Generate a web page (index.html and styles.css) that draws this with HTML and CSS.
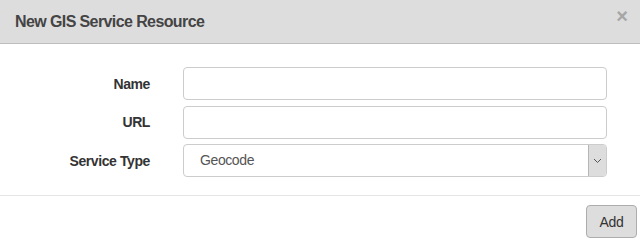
FILE: index.html
```html
<!DOCTYPE html>
<html lang="en">
<head>
    <meta charset="UTF-8">
    <title>New GIS Service Resource</title>
    <link rel="stylesheet" href="styles.css">
</head>
<body>
    <div class="modal">
        <div class="modal-header">
            <h4 class="modal-title">New GIS Service Resource</h4>
            <button type="button" class="close">&times;</button>
        </div>

        <div class="modal-body">
            <form class="form-grid">
                <label for="name">Name</label>
                <input type="text" id="name">

                <label for="url">URL</label>
                <input type="text" id="url">

                <label for="service-type">Service Type</label>
                <div class="select">
                    <span class="select-value">Geocode</span>
                    <span class="select-arrow">
                        <svg width="9" height="6" viewBox="0 0 9 6"><path d="M1 1 L4.5 4.5 L8 1" fill="none" stroke="#555" stroke-width="1"/></svg>
                    </span>
                </div>
            </form>
        </div>

        <div class="modal-footer">
            <button type="button" class="btn-add">Add</button>
        </div>
    </div>
</body>
</html>
```

FILE: styles.css
```css
body {
    margin: 0;
    font-family: "Liberation Sans", Arial, sans-serif;
    font-size: 14px;
    color: #333;
    background: #fff;
}
.modal-header {
    display: flex;
    align-items: center;
    justify-content: space-between;
    height: 43px;
    padding: 0 12px 0 15px;
    background-color: #dddddd;
    border-bottom: 1px solid #bdbdbd;
}
.modal-title {
    margin: 0;
    font-size: 16px;
    font-weight: bold;
    letter-spacing: -0.6px;
    color: #444;
}
.close {
    padding: 0;
    border: none;
    background: none;
    font-family: "Liberation Sans", Arial, sans-serif;
    font-size: 20px;
    font-weight: bold;
    line-height: 1;
    color: #a6a6a6;
    margin-top: -12px;
    cursor: pointer;
}
.modal-body {
    padding: 23px 0 18px;
}
.form-grid {
    display: grid;
    grid-template-columns: 150px 424px;
    column-gap: 33px;
    row-gap: 5.5px;
    align-items: center;
    margin: 0;
}
.form-grid label {
    text-align: right;
    font-weight: bold;
    letter-spacing: -0.4px;
    color: #333;
}
.form-grid input {
    box-sizing: border-box;
    height: 33px;
    width: 424px;
    margin: 0;
    padding: 6px 12px;
    border: 1px solid #ccc;
    border-radius: 4px;
    font: inherit;
}
.select {
    box-sizing: border-box;
    display: flex;
    height: 33px;
    border: 1px solid #ccc;
    border-radius: 4px;
    overflow: hidden;
}
.select-value {
    flex: 1;
    padding-left: 16px;
    line-height: 31px;
    letter-spacing: -0.4px;
    color: #555;
}
.select-arrow {
    display: flex;
    align-items: center;
    justify-content: center;
    width: 17px;
    background-color: #dddddd;
    border-left: 1px solid #b5b5b5;
}
.modal-footer {
    display: flex;
    justify-content: flex-end;
    padding: 9px 3px 0 0;
    border-top: 1px solid #e5e5e5;
}
.btn-add {
    height: 33px;
    width: 51px;
    padding: 0;
    border: 1px solid #adadad;
    border-radius: 4px;
    background-color: #dddddd;
    font-family: "Liberation Sans", Arial, sans-serif;
    font-size: 14px;
    letter-spacing: -0.3px;
    color: #333;
    cursor: pointer;
}
```
